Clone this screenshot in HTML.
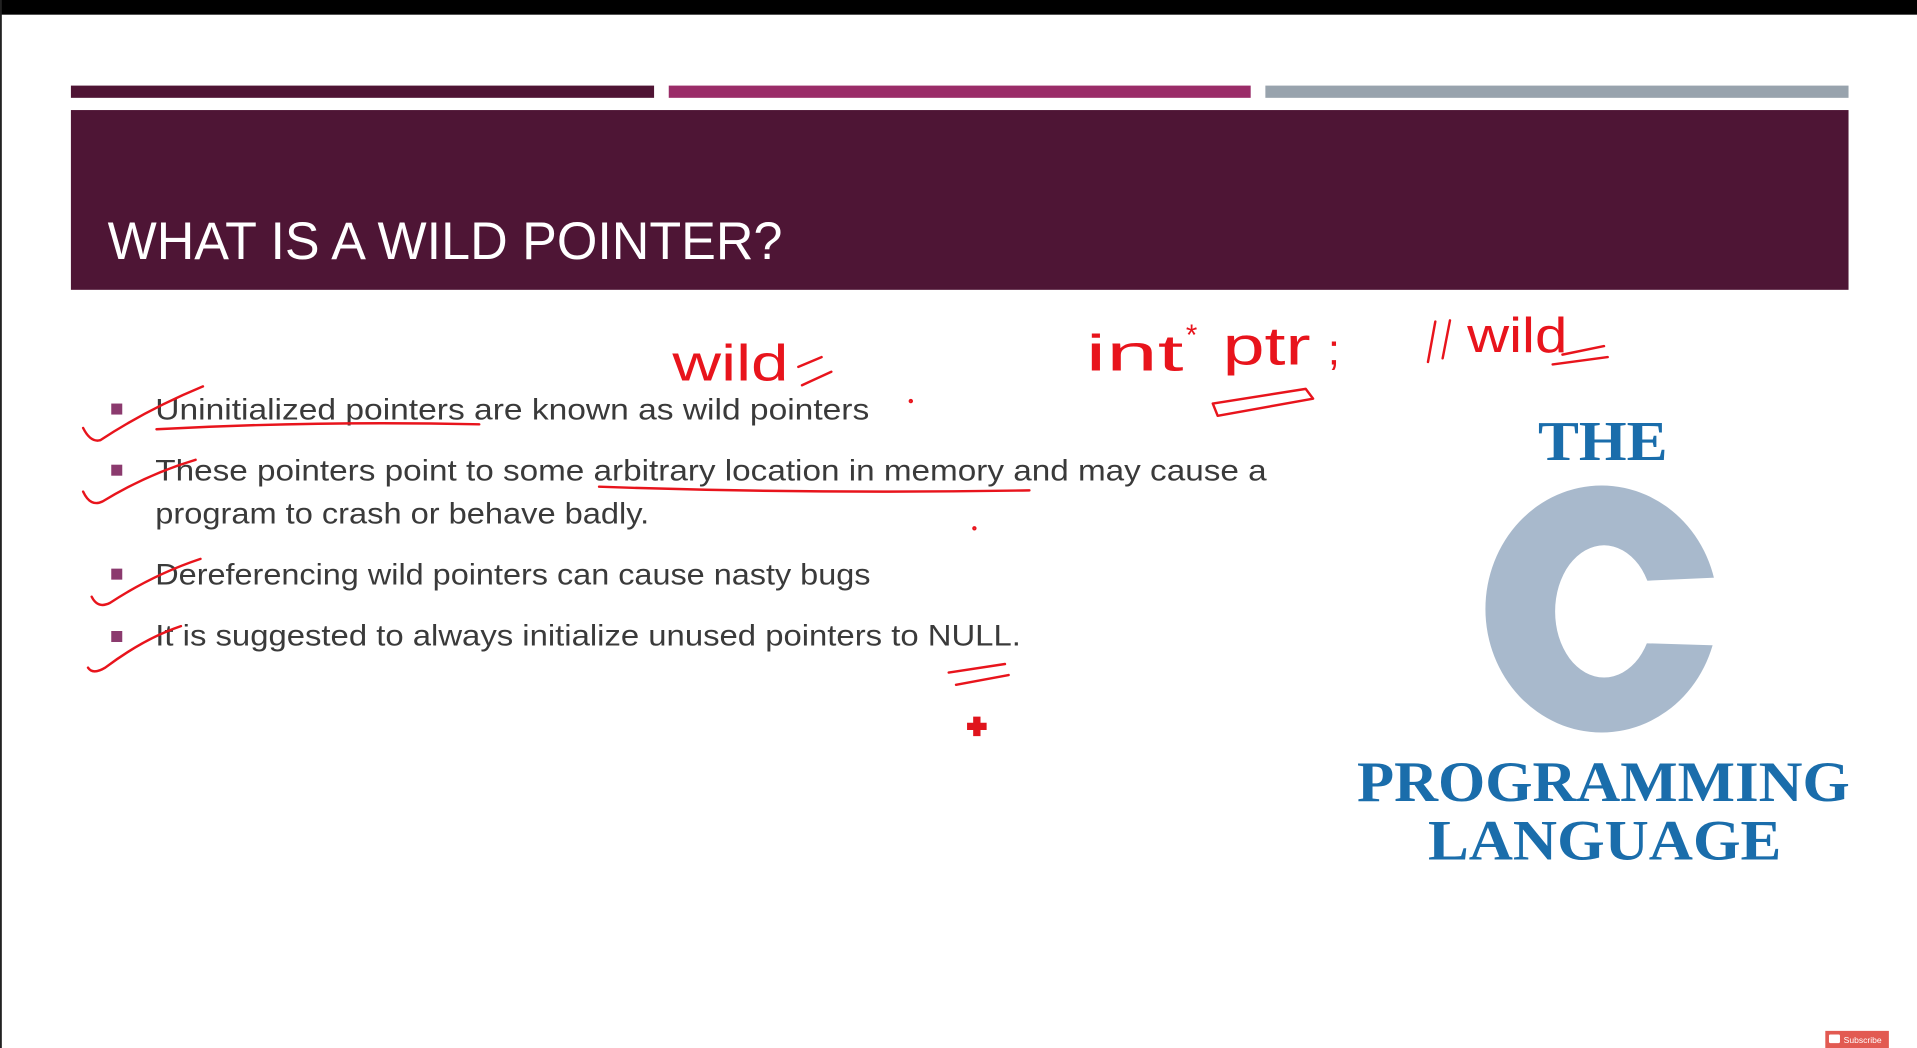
<!DOCTYPE html>
<html><head><meta charset="utf-8"><style>
html,body{margin:0;padding:0;background:#fff;width:1917px;height:1048px;overflow:hidden}
svg{display:block}
</style></head><body>
<svg width="1917" height="1048" viewBox="0 0 1568 857" preserveAspectRatio="none" xmlns="http://www.w3.org/2000/svg">
<rect x="0" y="0" width="1568" height="857" fill="#fff"/>
<rect x="0" y="0" width="1568" height="12" fill="#000"/>
<rect x="0" y="0" width="1.5" height="857" fill="#222"/>
<rect x="58" y="70" width="477" height="10" fill="#4f1434"/>
<rect x="547" y="70" width="476" height="10" fill="#9a2c68"/>
<rect x="1035" y="70" width="477" height="10" fill="#98a3ad"/>
<rect x="58" y="90" width="1454" height="147" fill="#4e1535"/>
<text x="88" y="212" font-family="Liberation Sans, sans-serif" font-size="43" fill="#fff" textLength="552" lengthAdjust="spacingAndGlyphs">WHAT IS A WILD POINTER?</text>
<g fill="#8b3a6e">
<rect x="91" y="330" width="9" height="9"/><rect x="91" y="380" width="9" height="9"/>
<rect x="91" y="465" width="9" height="9"/><rect x="91" y="516" width="9" height="9"/>
</g>
<g font-family="Liberation Sans, sans-serif" font-size="24" fill="#3a3a3a">
<text x="127" y="343" textLength="584" lengthAdjust="spacingAndGlyphs">Uninitialized pointers are known as wild pointers</text>
<text x="127" y="393" textLength="909" lengthAdjust="spacingAndGlyphs">These pointers point to some arbitrary location in memory and may cause a</text>
<text x="127" y="428" textLength="404" lengthAdjust="spacingAndGlyphs">program to crash or behave badly.</text>
<text x="127" y="478" textLength="585" lengthAdjust="spacingAndGlyphs">Dereferencing wild pointers can cause nasty bugs</text>
<text x="127" y="528" textLength="708" lengthAdjust="spacingAndGlyphs">It is suggested to always initialize unused pointers to NULL.</text>
</g>
<g font-family="Liberation Serif, serif" font-weight="bold" fill="#1a6dab">
<text x="1258" y="376" font-size="46" textLength="106" lengthAdjust="spacingAndGlyphs">THE</text>
<text x="1110" y="655" font-size="47" textLength="403" lengthAdjust="spacingAndGlyphs">PROGRAMMING</text>
<text x="1168" y="703" font-size="47" textLength="289" lengthAdjust="spacingAndGlyphs">LANGUAGE</text>
</g>
<path fill="#a8b9cc" fill-rule="evenodd" d="M1215,498 a95,101 0 1,0 190,0 a95,101 0 1,0 -190,0 Z M1272,500 a40,54 0 1,0 80,0 a40,54 0 1,0 -80,0 Z"/>
<path fill="#fff" d="M1345,475 L1410,472 L1410,528 L1345,526 Z"/>
<rect x="1493" y="843" width="52" height="14" fill="#e25a52"/>
<rect x="1496" y="846" width="9" height="7" fill="#fff" rx="1"/>
<text x="1508" y="853" font-family="Liberation Sans, sans-serif" font-size="7" fill="#fff">Subscribe</text>
<g stroke="#e8141c" stroke-width="2" fill="none" stroke-linecap="round" stroke-linejoin="round">
<path d="M68,350 Q74,362 82,360 Q120,335 166,316"/>
<path d="M68,402 Q74,415 84,410 Q120,388 160,376"/>
<path d="M75,488 Q80,498 90,493 Q125,470 164,457"/>
<path d="M72,546 Q76,552 86,546 Q118,522 148,512"/>
<path d="M128,351 Q260,344 392,347"/>
<path d="M490,398 Q660,404 842,401"/>
<path d="M653,300 L672,292 M656,315 L680,304"/>
<path d="M776,550 L822,543 M782,560 L825,552"/>
<path d="M1278,290 L1312,283 M1270,298 L1315,292"/>
<path d="M992,330 L1068,318 L1074,326 L996,340 Z"/>
<path d="M1168,296 L1174,263 M1180,293 L1186,262"/>
<circle cx="745" cy="328" r="0.8"/><circle cx="797" cy="432" r="0.8"/>
</g>
<g font-family="Liberation Sans, sans-serif" fill="#e8141c">
<text x="550" y="311" font-size="42" textLength="95" lengthAdjust="spacingAndGlyphs">wild</text>
<text x="888" y="303" font-size="42" textLength="80" lengthAdjust="spacingAndGlyphs">int</text>
<text x="970" y="282" font-size="24">*</text>
<text x="1000" y="298" font-size="44" textLength="72" lengthAdjust="spacingAndGlyphs">ptr</text>
<text x="1086" y="298" font-size="36">;</text>
<text x="1200" y="288" font-size="40" textLength="82" lengthAdjust="spacingAndGlyphs">wild</text>
</g>
<path fill="#e0141c" d="M796,586 h6 v5 h5 v6 h-5 v5 h-6 v-5 h-5 v-6 h5 Z"/>
</svg>
</body></html>
